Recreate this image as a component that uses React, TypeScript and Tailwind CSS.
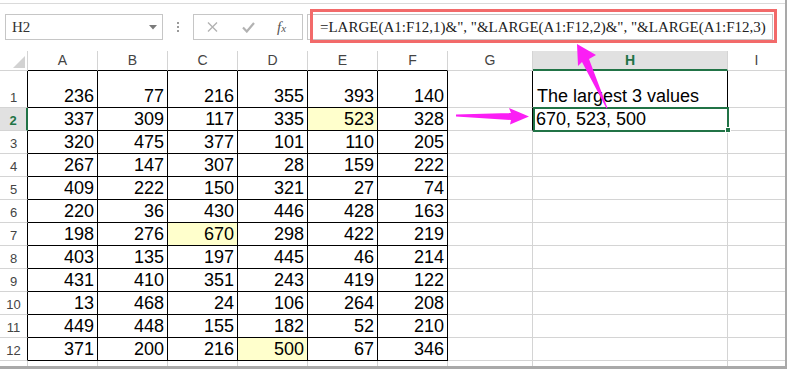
import React from 'react';

const values: number[][] = [
  [236, 77, 216, 355, 393, 140],
  [337, 309, 117, 335, 523, 328],
  [320, 475, 377, 101, 110, 205],
  [267, 147, 307, 28, 159, 222],
  [409, 222, 150, 321, 27, 74],
  [220, 36, 430, 446, 428, 163],
  [198, 276, 670, 298, 422, 219],
  [403, 135, 197, 445, 46, 214],
  [431, 410, 351, 243, 419, 122],
  [13, 468, 24, 106, 264, 208],
  [449, 448, 155, 182, 52, 210],
  [371, 200, 216, 500, 67, 346],
];

// row index - column index (zero based) of the shaded cells
const shaded = new Set(['1-4', '6-2', '11-3']);

const letters = ['A', 'B', 'C', 'D', 'E', 'F', 'G', 'H', 'I'];

function FormulaBar() {
  return (
    <div className="relative h-[51px]">
      <div className="h-[4px] border-b border-b-[#dadada]" />
      <div className="mt-[10px] flex h-[26px] items-stretch">
        <div className="ml-[5px] flex w-[158px] items-center justify-between border border-[#c6c6c6] pl-[6px] pr-[5px] font-['Liberation_Serif',serif] text-[15px] text-[#333]">
          <span>H2</span>
          <svg width="8" height="5" viewBox="0 0 8 5">
            <polygon points="0,0 8,0 4,4.5" fill="#7a7a7a" />
          </svg>
        </div>
        <div className="flex w-[30px] flex-col items-center justify-center gap-[2px]">
          <div className="h-[2px] w-[2px] bg-[#9a9a9a]" />
          <div className="h-[2px] w-[2px] bg-[#9a9a9a]" />
          <div className="h-[2px] w-[2px] bg-[#9a9a9a]" />
        </div>
        <div className="flex w-[110px] items-center border border-[#c6c6c6] pl-[13px]">
          <svg width="11" height="10" viewBox="0 0 11 10">
            <path d="M1 0.5 L10 9.5 M10 0.5 L1 9.5" stroke="#b2b2b2" strokeWidth="1.4" />
          </svg>
          <svg className="ml-[24px]" width="13" height="11" viewBox="0 0 13 11">
            <path d="M1 5.5 L4.8 9.5 L12 1" stroke="#b2b2b2" strokeWidth="2.2" fill="none" />
          </svg>
          <span className="ml-[22px] font-['Liberation_Serif',serif] text-[15px] italic leading-none text-[#555]">
            f<span className="text-[11px]">x</span>
          </span>
        </div>
        <div className="ml-[4px] mr-[12px] flex flex-1 items-center border border-[#c6c6c6] pl-[12px] font-['Liberation_Serif',serif] text-[15px] text-[#222]">
          =LARGE(A1:F12,1)&amp;", "&amp;LARGE(A1:F12,2)&amp;", "&amp;LARGE(A1:F12,3)
        </div>
      </div>
      <div className="absolute left-[310px] top-[9px] h-[34px] w-[467px] border-[3px] border-[#f26a6a]" />
    </div>
  );
}

function Sheet() {
  const cells: React.ReactNode[] = [];

  // column header row
  cells.push(
    <div key="corner" className="flex items-end justify-end border-b border-r border-b-[#d4d4d4] border-r-[#d4d4d4] pb-[2px] pr-[2px]">
      <svg width="12" height="12" viewBox="0 0 12 12">
        <polygon points="12,0 12,12 0,12" fill="#d2d2d2" />
      </svg>
    </div>
  );
  letters.forEach((l, c) => {
    let cls = 'flex items-center justify-center border-r border-r-[#d4d4d4] text-[14px] leading-[19px] text-[#444] ';
    if (c < 6) cls += 'border-b border-b-black';
    else if (l === 'H') cls += 'border-b-2 border-b-[#217346] bg-[#e1e1e1] font-bold text-[#217346]';
    else cls += 'border-b border-b-[#d4d4d4]';
    if (l === 'I') cls = cls.replace('border-r border-r-[#d4d4d4] ', '');
    cells.push(
      <div key={'h' + l} className={cls}>
        {l}
      </div>
    );
  });

  values.forEach((row, r) => {
    const active = r === 1;
    cells.push(
      <div
        key={'r' + r}
        className={
          active
            ? 'flex items-end justify-center border-b border-r-2 border-b-[#d4d4d4] border-r-[#217346] bg-[#e1e1e1] pb-[2px] text-[13px] font-bold leading-[15px] text-[#217346]'
            : 'flex items-end justify-center border-b border-r border-b-[#d4d4d4] border-r-black pb-[2px] text-[13px] leading-[15px] text-[#444]'
        }
      >
        {r + 1}
      </div>
    );
    row.forEach((v, c) => {
      cells.push(
        <div
          key={r + '-' + c}
          className={
            shaded.has(r + '-' + c)
              ? 'flex items-end justify-end border-b border-r border-black bg-[#ffffcc] pb-[1px] pr-[3px]'
              : 'flex items-end justify-end border-b border-r border-black pb-[1px] pr-[3px]'
          }
        >
          {v}
        </div>
      );
    });
    // G
    cells.push(
      <div
        key={'g' + r}
        className={
          r < 2
            ? 'border-b border-r border-b-[#d4d4d4] border-r-black'
            : 'border-b border-r border-b-[#d4d4d4] border-r-[#d4d4d4]'
        }
      />
    );
    // H
    if (r === 0) {
      cells.push(
        <div key="h0" className="flex items-end border-b border-r border-black pb-[1px] pl-[4px]">
          The largest 3 values
        </div>
      );
    } else if (r === 1) {
      cells.push(
        <div key="h1" className="relative flex items-end border-b border-r border-black pb-[1px] pl-[3px]">
          670, 523, 500
          <div className="absolute left-0 top-[-1px] h-[25px] w-[196px] border-2 border-[#217346]" />
          <div className="absolute bottom-[-3px] right-[-4px] h-[6px] w-[6px] border border-white bg-[#217346]" />
        </div>
      );
    } else {
      cells.push(<div key={'hh' + r} className="border-b border-r border-[#d4d4d4]" />);
    }
    // I
    cells.push(<div key={'i' + r} className="border-b border-b-[#d4d4d4]" />);
  });

  // partial row at the bottom
  for (let c = 0; c < 10; c++) {
    cells.push(<div key={'p' + c} className={c < 9 ? 'border-r border-r-[#d4d4d4]' : ''} />);
  }

  return (
    <div className="grid grid-cols-[28px_70px_70px_70px_70px_70px_70px_85px_195px_57px] grid-rows-[20px_37px_repeat(11,23px)_5px] text-[18px] leading-[20px] text-black">
      {cells}
    </div>
  );
}

export default function App() {
  return (
    <div className="relative h-[369px] w-[787px] overflow-hidden border-b-[3px] border-r-2 border-b-[#a9a9a9] border-r-[#a9a9a9] bg-white font-['Liberation_Sans',Arial,sans-serif]">
      <FormulaBar />
      <Sheet />
      <svg className="pointer-events-none absolute left-0 top-0" width="787" height="369">
        <polygon
          points="456,114.6 511,113 509,108 529,116.6 510,124.5 511,120 456,116.4"
          fill="#fb1ef5"
        />
        <polygon
          points="577,44 596,55 589,59 607.5,108 606.5,108.5 582,62 578,66"
          fill="#fb1ef5"
        />
      </svg>
    </div>
  );
}
